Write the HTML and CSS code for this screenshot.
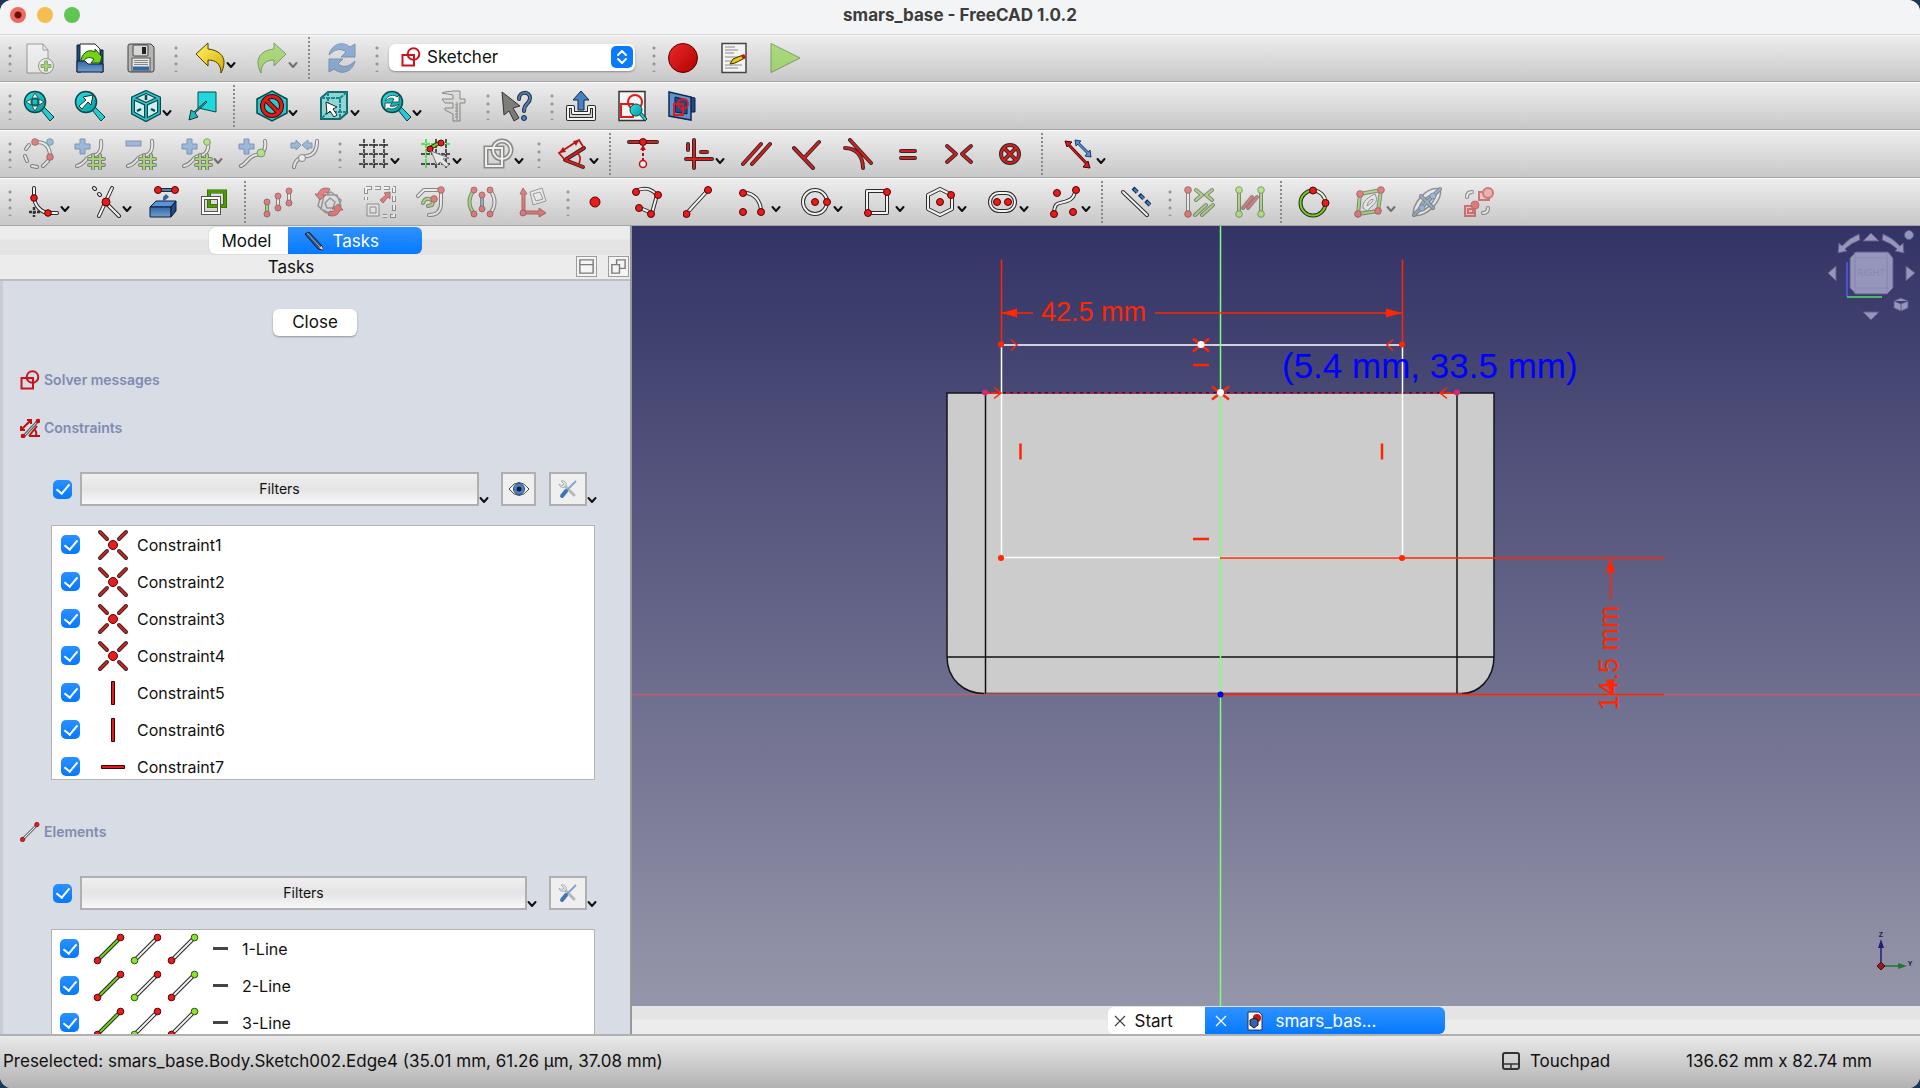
FILE: index.html
```html
<!DOCTYPE html>
<html lang="en">
<head>
<meta charset="utf-8">
<title>smars_base - FreeCAD 1.0.2</title>
<link rel="stylesheet" href="styles.css">
</head>
<body>
<svg class="defs" aria-hidden="true">
  <defs>
    <linearGradient id="gy" x1="0" y1="0" x2="1" y2="1"><stop offset="0" stop-color="#fff36b"/><stop offset="1" stop-color="#d9ae00"/></linearGradient>
    <linearGradient id="gb" x1="0" y1="0" x2="0" y2="1"><stop offset="0" stop-color="#3465a4"/><stop offset="1" stop-color="#729fcf"/></linearGradient>
    <linearGradient id="gr" x1="0" y1="0" x2="1" y2="1"><stop offset="0" stop-color="#ef2929"/><stop offset="1" stop-color="#b00000"/></linearGradient>
    <linearGradient id="gt" x1="0" y1="0" x2="1" y2="1"><stop offset="0" stop-color="#34e0e2"/><stop offset="1" stop-color="#06989a"/></linearGradient>
    <symbol id="chev" viewBox="0 0 10 8"><path d="M1.500 2L5 6L8.500 2" fill="none" stroke="currentColor" stroke-width="2" stroke-linecap="round" stroke-linejoin="round"/></symbol>
    <symbol id="sketch" viewBox="0 0 20 20"><path d="M1.500 8H13V18.500H1.500Z" fill="none" stroke="#c8141e" stroke-width="2"/><circle cx="12.500" cy="7" r="5.800" fill="none" stroke="#c8141e" stroke-width="2"/></symbol>
    <symbol id="coincident" viewBox="0 0 32 32">
      <path class="k" d="M3 3L10 10M29 3L22 10M3 29L10 22M29 29L22 22"/><path class="r" d="M3 3L10 10M29 3L22 10M3 29L10 22M29 29L22 22"/><circle class="dr" cx="16" cy="16" r="4.500"/>
    </symbol>
    <symbol id="vertical" viewBox="0 0 32 32"><path d="M14.500 4.500H17.500V27.500H14.500Z" fill="#e01b1b" stroke="#3a0000"/></symbol>
    <symbol id="horizontal" viewBox="0 0 32 32"><path d="M4.500 14.500H27.500V17.500H4.500Z" fill="#e01b1b" stroke="#3a0000"/></symbol>
    <symbol id="edge" viewBox="0 0 32 32"><path class="k" d="M4 28L28 4"/><path class="g" d="M4 28L28 4"/><circle class="dr" cx="4.500" cy="27.500" r="3.300"/><circle class="dr" cx="27.500" cy="4.500" r="3.300"/></symbol>
    <symbol id="startpoint" viewBox="0 0 32 32"><path class="k" d="M4 28L28 4"/><path class="w" d="M4 28L28 4"/><circle class="dg" cx="4.500" cy="27.500" r="3.300"/><circle class="dr" cx="27.500" cy="4.500" r="3.300"/></symbol>
    <symbol id="endpoint" viewBox="0 0 32 32"><path class="k" d="M4 28L28 4"/><path class="w" d="M4 28L28 4"/><circle class="dr" cx="4.500" cy="27.500" r="3.300"/><circle class="dg" cx="27.500" cy="4.500" r="3.300"/></symbol>
    <symbol id="line" viewBox="0 0 32 32"><path class="k" d="M4 28L27 5"/><path class="w" d="M4 28L27 5"/><circle class="dr" cx="4" cy="28" r="3.500"/><circle class="dr" cx="27" cy="4" r="3.500"/></symbol>
    <symbol id="lens" viewBox="0 0 32 32"><path d="M18 20L27 31L31 27L21 17Z" fill="#22ccd0" stroke="#0a3a3c"/><circle cx="12" cy="12" r="10.500" fill="url(#gt)" stroke="#0a4a4c" stroke-width="1.500"/></symbol>
    <symbol id="plus" viewBox="0 0 32 32"><path d="M6 1H11V6H16V11H11V16H6V11H1V6H6Z" fill="#5a8fd0" stroke="#204a87"/></symbol>
    <symbol id="hash" viewBox="0 0 32 32"><path class="k" d="M19 17V31M26 17V31M15 21H30M15 27H30"/><path class="g" d="M19 17V31M26 17V31M15 21H30M15 27H30"/></symbol>
    <symbol id="tools" viewBox="0 0 20 20"><path d="M6 6L16 16" stroke="#b4b8bc" stroke-width="3" stroke-linecap="round"/><path d="M3 2L6 5L4 7L1 5C2 9 5 9 7 8L8 7C9 4 7 1 3 2Z" fill="#dfe2e4" stroke="#a0a4a8" stroke-width=".8"/><path d="M18 2L9 11" stroke="#7fa5cc" stroke-width="1.800"/><path d="M8 12L4 17" stroke="#3f74b8" stroke-width="4" stroke-linecap="round"/></symbol>
  </defs>
</svg>

<div class="app">
  <header class="titlebar">
    <div class="lights"><span class="light close"></span><span class="light min"></span><span class="light max"></span></div>
    <h1>smars_base - FreeCAD 1.0.2</h1>
  </header>

  <div class="toolbar main" role="toolbar" aria-label="File">
    <span class="grip"></span>
    <button class="tool off" aria-label="New"><svg viewBox="0 0 32 32"><path d="M4 2H20L25 8V31H4Z" fill="#fafafa" stroke="#555"/><path d="M20 2V8H25" fill="none" stroke="#555"/><circle cx="23" cy="24" r="7.500" fill="#fff" stroke="#555"/><path d="M21.500 19H24.500V22.500H28V25.500H24.500V29H21.500V25.500H18V22.500H21.500Z" fill="#73d216" stroke="#3a7a04"/></svg></button>
    <button class="tool" aria-label="Open"><svg viewBox="0 0 32 32"><path d="M3 3H7V30H3ZM26 8H29V30H26Z" fill="#204a87" stroke="#0b1e3c"/><path d="M6 2H21L26 7V24H6Z" fill="#fff" stroke="#222"/><path d="M7 18C9 9 16 7 21 10V7L28 15L26 21H17L20 17C15 14 11 16 9 20Z" fill="#73d216" stroke="#1f4d02"/><path d="M3 19H11L14 22H29V30H3Z" fill="url(#gb)" stroke="#0b1e3c"/></svg></button>
    <button class="tool" aria-label="Save"><svg viewBox="0 0 32 32"><path d="M3 4Q3 2 5 2H26L29 5V28Q29 30 27 30H5Q3 30 3 28Z" fill="#b4b6b2" stroke="#444"/><rect x="8" y="3" width="15" height="11" rx="1" fill="#d8d8d8" stroke="#444"/><rect x="17" y="5" width="4" height="7" fill="#222"/><rect x="7" y="16" width="18" height="13" fill="#e6e8e6" stroke="#555"/><path d="M9 18.500H23M9 20.500H23M9 22.500H23" stroke="#888"/><rect x="8" y="24.500" width="16" height="4" fill="#3465a4"/></svg></button>
    <span class="grip"></span>
    <button class="tool menu" aria-label="Undo"><svg viewBox="0 0 32 32"><path d="M2 12L14 1V7C25 8 30 14 30 20C30 25 28 29 27 31C27 22 22 18 14 18V24Z" fill="url(#gy)" stroke="#4d4000"/></svg><svg class="chev"><use href="#chev"/></svg></button>
    <button class="tool menu off" aria-label="Redo"><svg viewBox="0 0 32 32"><path d="M30 12L18 1V7C7 8 2 14 2 20C2 25 4 29 5 31C5 22 10 18 18 18V24Z" fill="#73d216" stroke="#1f5d02"/></svg><svg class="chev"><use href="#chev"/></svg></button>
    <span class="sep"></span>
    <button class="tool off" aria-label="Refresh"><svg viewBox="0 0 32 32"><path d="M3 13C5 3 16 -2 24 5L29 2V15H15L20 10C15 6 9 7 3 13ZM29 19C27 29 16 34 8 27L3 30V17H17L12 22C17 26 23 25 29 19Z" fill="#3f78c4" stroke="#204a87"/></svg></button>
    <span class="grip"></span>
    <label class="workbench"><svg class="wb-icon"><use href="#sketch"/></svg>
      <select aria-label="Workbench"><option>Sketcher</option></select>
      <svg class="stepper" viewBox="0 0 22 22"><rect width="22" height="22" rx="5" fill="#0a7aff"/><path d="M7 9L11 5L15 9M7 13L11 17L15 13" fill="none" stroke="#fff" stroke-width="2" stroke-linecap="round" stroke-linejoin="round"/></svg>
    </label>
    <span class="grip"></span>
    <button class="tool" aria-label="Record macro"><svg viewBox="0 0 32 32"><circle cx="16" cy="16" r="14.500" fill="url(#gr)" stroke="#5a0000"/></svg></button>
    <button class="tool" aria-label="Macros"><svg viewBox="0 0 32 32"><rect x="4" y="1.500" width="24" height="29" fill="#f2f3f1" stroke="#444" stroke-width="1.500"/><path d="M7 5H17M7 8H20M7 11H16M7 15H25M7 19H13M7 23H24M7 26H20" stroke="#888"/><path d="M12 22L15 17L25 13L27 16L17 21Z" fill="#e8c810" stroke="#3a3000"/><path d="M23 14L26 12L28 15L25 17Z" fill="#cc1010"/></svg></button>
    <button class="tool off" aria-label="Execute macro"><svg viewBox="0 0 32 32"><path d="M2 1.500L31 16L2 30.500Z" fill="#73d216" stroke="#1f5d02"/></svg></button>
  </div>

  <div class="toolbar" role="toolbar" aria-label="View">
    <span class="grip"></span>
    <button class="tool" aria-label="Fit all"><svg viewBox="0 0 32 32"><use href="#lens"/><path d="M12 3L15 8H9ZM12 21L15 16H9ZM3 12L8 9V15ZM21 12L16 9V15Z" fill="#fff" stroke="#0a3a3c" stroke-width=".8"/><rect x="9" y="9" width="6" height="6" fill="none" stroke="#0a3a3c"/></svg></button>
    <button class="tool" aria-label="Fit selection"><svg viewBox="0 0 32 32"><use href="#lens"/><path d="M5 16L12 10L9 7L19 5L17 15L14 12L8 19Z" fill="#fff" stroke="#0a3a3c"/></svg></button>
    <button class="tool menu" aria-label="Isometric"><svg viewBox="0 0 32 32"><path class="cube" d="M16 2L29 8V23L16 30L3 23V8ZM3 8L16 14L29 8M16 14V30"/><path d="M16 2L29 8V23L16 30L3 23V8ZM3 8L16 14L29 8M16 14V30" fill="none" stroke="#2cc8cc" stroke-width="1.500"/><path d="M16 5V10M7 21L11 19M25 21L21 19" stroke="#0a4a4c" stroke-width="2.500"/></svg><svg class="chev"><use href="#chev"/></svg></button>
    <button class="tool" aria-label="View plane"><svg viewBox="0 0 32 32"><path d="M11 2H29V22L11 18Z" fill="#22d8dc" stroke="#0a4a4c"/><path d="M20 12L8 23L11 27L2 30L4 20L7 22L19 11Z" fill="#22b8bc" stroke="#0a3a3c"/></svg></button>
    <span class="sep"></span>
    <button class="tool menu" aria-label="Draw style"><svg viewBox="0 0 32 32"><path d="M16 1L31 9V23L16 31L1 23V9Z" fill="#1fcfd2" stroke="#0a4a4c" stroke-width="1.500"/><circle cx="16" cy="16" r="9.500" fill="none" stroke="#4a0000" stroke-width="5"/><path d="M9 9L23 23" stroke="#4a0000" stroke-width="5"/><circle cx="16" cy="16" r="9.500" fill="none" stroke="#e01b1b" stroke-width="3"/><path d="M9 9L23 23" stroke="#e01b1b" stroke-width="3"/></svg><svg class="chev"><use href="#chev"/></svg></button>
    <button class="tool menu" aria-label="Bounding box"><svg viewBox="0 0 32 32"><path d="M3 8L10 2H29V23L22 29H3Z" fill="#8fd4d6" stroke="#16696c" stroke-width="2"/><path d="M3 8H22V29M22 8L29 2M10 2V22L3 29M10 22H29" fill="none" stroke="#16898c" stroke-width="2" stroke-dasharray="4 1"/><path d="M8 12L19 17L15 19L19 25L16 27L12 21L9 24Z" fill="#fff" stroke="#222"/></svg><svg class="chev"><use href="#chev"/></svg></button>
    <button class="tool menu" aria-label="Sync view"><svg viewBox="0 0 32 32"><use href="#lens"/><path d="M5 11C7 5 14 4 17 7L19 5V12H12L14 9C11 7 8 9 5 11ZM19 14C17 19 11 20 8 18L5 20V13H12L10 16C13 17 16 16 19 14Z" fill="#fff" stroke="#0a3a3c" stroke-width=".8"/></svg><svg class="chev"><use href="#chev"/></svg></button>
    <button class="tool off" aria-label="Measure"><svg viewBox="0 0 32 32"><path d="M5 3C9 1 13 2 16 1H23V9H28V13H23V31H16V24L8 20V18H16V13H8L5 9H16V5Z" fill="#d4d4d0" stroke="#333"/><path d="M20 12V30M18 15H21M18 18H21M18 21H21M18 24H21M18 27H21" stroke="#444"/></svg></button>
    <span class="grip"></span>
    <button class="tool" aria-label="What's this"><svg viewBox="0 0 32 32"><path d="M1 2L19 16L12 18L18 28L13 31L8 21L3 25Z" fill="#7b7d79" stroke="#333"/><path class="k" d="M18 9C18 1 29 1 29 8C29 14 23 13 23 21"/><path class="b" d="M18 9C18 1 29 1 29 8C29 14 23 13 23 21"/><circle cx="23" cy="28" r="2.500" fill="#4a80c0" stroke="#10284c"/></svg></button>
    <span class="grip"></span>
    <button class="tool" aria-label="Leave sketch"><svg viewBox="0 0 32 32"><path class="k" d="M8 17H3V29H29V17H24M8 17V23H24V17"/><path class="w" d="M8 17H3V29H29V17H24M8 17V23H24V17"/><path d="M16 1L24 10H19V20H13V10H8Z" fill="#4a80c0" stroke="#10284c"/></svg></button>
    <button class="tool" aria-label="View sketch"><svg viewBox="0 0 32 32"><rect x="3" y="1.500" width="26" height="29" fill="#f4f4f4" stroke="#333" stroke-width="1.500"/><path d="M5 14H17V27H5Z" fill="none" stroke="#e01b1b" stroke-width="2"/><circle cx="19" cy="12" r="7" fill="none" stroke="#e01b1b" stroke-width="2"/><path d="M23 24L29 31L31 29L25 22Z" fill="#22ccd0" stroke="#0a3a3c"/><circle cx="20" cy="20" r="6" fill="url(#gt)" stroke="#0a4a4c"/></svg></button>
    <button class="tool" aria-label="View section"><svg viewBox="0 0 32 32"><path d="M18 6L28 8V22H18Z" fill="#204a87" stroke="#0b1e3c"/><path d="M2 2L24 7V30L2 26Z" fill="#5f93cf" stroke="#10284c" stroke-width="1.500"/><path d="M8 7L20 10V24L8 22Z" fill="#204a87" stroke="#0b1e3c"/><path d="M7 14H16V25H7Z" fill="none" stroke="#e01b1b" stroke-width="2"/><circle cx="16" cy="14" r="5" fill="none" stroke="#e01b1b" stroke-width="2"/></svg></button>
  </div>

  <div class="toolbar" role="toolbar" aria-label="Constraints">
    <span class="grip"></span>
    <button class="tool off" aria-label="B-spline"><svg viewBox="0 0 32 32"><path class="k" d="M12 5C20 2 27 8 27 18M6 7L3 11M2 18L4 23M9 28L14 29M20 28L25 23"/><path class="w" d="M12 5C20 2 27 8 27 18M6 7L3 11M2 18L4 23M9 28L14 29M20 28L25 23"/><circle class="dr" cx="12" cy="4" r="3.300"/><circle class="db" cx="27" cy="4" r="3.300"/><circle class="dr" cx="27" cy="19" r="3.300"/></svg></button>
    <button class="tool off" aria-label="Increase degree"><svg viewBox="0 0 32 32"><path class="k" d="M3 28C12 26 11 19 18 18C26 17 28 11 27 3"/><path class="w" d="M3 28C12 26 11 19 18 18C26 17 28 11 27 3"/><use href="#plus"/><use href="#hash"/></svg></button>
    <button class="tool off" aria-label="Decrease degree"><svg viewBox="0 0 32 32"><path class="k" d="M3 28C12 26 11 19 18 18C26 17 28 11 27 3"/><path class="w" d="M3 28C12 26 11 19 18 18C26 17 28 11 27 3"/><rect x="1" y="3" width="15" height="5" fill="#5a8fd0" stroke="#204a87"/><use href="#hash"/></svg></button>
    <button class="tool menu off" aria-label="Increase multiplicity"><svg viewBox="0 0 32 32"><path class="k" d="M3 28C12 26 11 19 18 18C26 17 28 11 27 3"/><path class="w" d="M3 28C12 26 11 19 18 18C26 17 28 11 27 3"/><use href="#plus"/><use href="#hash"/><circle class="dg" cx="26" cy="4" r="3.300"/></svg><svg class="chev"><use href="#chev"/></svg></button>
    <button class="tool off" aria-label="Insert knot"><svg viewBox="0 0 32 32"><path class="k" d="M3 28C9 26 9 19 18 17C26 16 28 11 27 3"/><path class="w" d="M3 28C9 26 9 19 18 17C26 16 28 11 27 3"/><use href="#plus"/><circle class="dg" cx="23" cy="15" r="4"/></svg></button>
    <button class="tool off" aria-label="Join curves"><svg viewBox="0 0 32 32"><path class="k" d="M5 29C6 22 12 18 18 18C26 17 28 11 28 3"/><path class="w" d="M5 29C6 22 12 18 18 18C26 17 28 11 28 3"/><path d="M2 5H7V2L12 7L7 12V10H2ZM23 5H19V2L13 7L19 12V10H23Z" fill="#5a8fd0" stroke="#204a87"/><circle cx="13" cy="20" r="3.500" fill="#fff" stroke="#333"/></svg></button>
    <span class="grip"></span>
    <button class="tool menu" aria-label="Grid"><svg viewBox="0 0 32 32"><path d="M1 7H31M1 16H31M1 26H31M6 1V31M16 1V31M26 1V31" fill="none" stroke="#222" stroke-width="1.500" stroke-dasharray="4 1"/></svg><svg class="chev"><use href="#chev"/></svg></button>
    <button class="tool menu" aria-label="Snap"><svg viewBox="0 0 32 32"><path d="M1 16H31M1 26H31M16 1V31M26 1V31" fill="none" stroke="#222" stroke-width="1.500" stroke-dasharray="4 1"/><path d="M1 6H31M6 1V31" fill="none" stroke="#2adf2a" stroke-width="1.500" stroke-dasharray="4 1"/><path class="k" d="M10 10L21 4"/><path class="g" d="M10 10L21 4"/><circle class="dr" cx="10" cy="11" r="3"/><circle class="dr" cx="21" cy="5" r="3"/><path d="M11 13L29 20L23 21L29 27L26 29L20 24L17 27Z" fill="#e6e6e6" stroke="#777"/></svg><svg class="chev"><use href="#chev"/></svg></button>
    <button class="tool menu" aria-label="Rendering order"><svg viewBox="0 0 32 32"><path d="M4 10H20V28H4Z" fill="none" stroke="#8a8a85" stroke-width="5"/><circle cx="20" cy="12" r="9" fill="none" stroke="#8a8a85" stroke-width="5"/><path d="M4 10H20V28H4Z" fill="none" stroke="#eee" stroke-width="2"/><circle cx="20" cy="12" r="9" fill="none" stroke="#eee" stroke-width="2"/></svg><svg class="chev"><use href="#chev"/></svg></button>
    <span class="grip"></span>
    <button class="tool menu" aria-label="Dimension"><svg viewBox="0 0 32 32"><path class="k" d="M26 29L8 22L27 10"/><path class="r" d="M26 29L8 22L27 10"/><path d="M20 15Q25 18 22 26M8 22L2 15L22 2L27 10" fill="none" stroke="#c01010" stroke-width="1.700"/><path d="M2 15L6 9L9 14ZM22 2L16 3L19 8Z" fill="#c01010"/></svg><svg class="chev"><use href="#chev"/></svg></button>
    <span class="sep"></span>
    <button class="tool" aria-label="Point on object"><svg viewBox="0 0 32 32"><path class="k" d="M2 4H30"/><path class="r" d="M2 4H30"/><circle class="dr" cx="16" cy="4" r="3.500"/><path d="M16 10V22" stroke="#b01010" stroke-width="2" stroke-dasharray="3 2"/><path d="M16 7L19 12H13Z" fill="#c01010"/><circle cx="16" cy="26" r="3.500" fill="#eee" stroke="#c01010" stroke-width="1.500"/></svg></button>
    <button class="tool menu" aria-label="Horizontal or vertical"><svg viewBox="0 0 32 32"><path class="k" d="M11 2V30M3 21H29M5 6V12M18 14H24"/><path class="r" d="M11 2V30M3 21H29M5 6V12M18 14H24"/></svg><svg class="chev"><use href="#chev"/></svg></button>
    <button class="tool" aria-label="Parallel"><svg viewBox="0 0 32 32"><path class="k" d="M3 26L21 6M12 26L30 6"/><path class="r" d="M3 26L21 6M12 26L30 6"/></svg></button>
    <button class="tool" aria-label="Perpendicular"><svg viewBox="0 0 32 32"><path class="k" d="M3 10L22 30M13 20L28 4"/><path class="r" d="M3 10L22 30M13 20L28 4"/></svg></button>
    <button class="tool" aria-label="Tangent"><svg viewBox="0 0 32 32"><path class="k" d="M8 2L29 25M3 10C14 10 21 18 21 30"/><path class="r" d="M8 2L29 25M3 10C14 10 21 18 21 30"/></svg></button>
    <button class="tool" aria-label="Equal"><svg viewBox="0 0 32 32"><path class="k" d="M8 13H22M8 20H22"/><path class="r" d="M8 13H22M8 20H22"/></svg></button>
    <button class="tool" aria-label="Symmetric"><svg viewBox="0 0 32 32"><path class="k" d="M3 8L12 16L3 24M27 8L18 16L27 24"/><path class="r" d="M3 8L12 16L3 24M27 8L18 16L27 24"/></svg></button>
    <button class="tool" aria-label="Block"><svg viewBox="0 0 32 32"><path class="k" d="M9 10L21 22M21 10L9 22"/><circle class="k" cx="15" cy="16" r="9"/><circle class="r" cx="15" cy="16" r="9"/><path class="r" d="M9 10L21 22M21 10L9 22"/></svg></button>
    <span class="sep"></span>
    <button class="tool menu" aria-label="Toggle constraint"><svg viewBox="0 0 32 32"><path d="M4 6L23 26" stroke="#3a0000" stroke-width="3"/><path d="M1 3L8 4L3 9ZM26 30L19 29L24 23Z" fill="#e01b1b" stroke="#3a0000"/><path d="M4 6L23 26" stroke="#e01b1b" stroke-width="1.500"/><path d="M13 4L25 16" stroke="#1a3a68" stroke-width="3"/><path d="M11 2L17 3L12 8ZM27 19L21 18L26 12Z" fill="#5a90d4" stroke="#1a3a68"/><path d="M13 4L25 16" stroke="#5a90d4" stroke-width="1.500"/></svg><svg class="chev"><use href="#chev"/></svg></button>
  </div>

  <div class="toolbar" role="toolbar" aria-label="Geometry">
    <span class="grip"></span>
    <button class="tool menu" aria-label="Fillet"><svg viewBox="0 0 32 32"><path class="k" d="M6 2V10C6 20 14 27 21 27H29"/><path class="w" d="M6 2V10C6 20 14 27 21 27H29"/><path d="M6 21V31M1 26H12" stroke="#333" stroke-width="2.500" stroke-dasharray="3 1"/><circle class="dr" cx="6" cy="12" r="3.300"/><circle class="dr" cx="20" cy="27" r="3.300"/></svg><svg class="chev"><use href="#chev"/></svg></button>
    <button class="tool menu" aria-label="Trim"><svg viewBox="0 0 32 32"><path class="k" d="M22 2L9 30M15 16L29 30M4 2L5 3M9 8L10 9"/><path class="w" d="M22 2L9 30M15 16L29 30M4 2L5 3M9 8L10 9"/><circle class="dr" cx="16" cy="16" r="4"/></svg><svg class="chev"><use href="#chev"/></svg></button>
    <button class="tool" aria-label="External geometry"><svg viewBox="0 0 32 32"><path d="M3 21L9 15H29L24 21Z" fill="#5a93d8" stroke="#0b1e3c"/><path d="M3 21H24V31H3Z" fill="url(#gb)" stroke="#0b1e3c"/><path d="M24 21L29 15V25L24 31Z" fill="#204a87" stroke="#0b1e3c"/><path class="k" d="M12 4H28"/><path class="b" d="M12 4H28"/><path d="M19 8L22 11L16 16V11Z" fill="#3465a4"/><circle class="dr" cx="11" cy="4" r="3.500"/><circle class="dr" cx="28" cy="4" r="3.500"/></svg></button>
    <button class="tool" aria-label="Carbon copy"><svg viewBox="0 0 32 32"><path d="M11 5.500H27V20H11Z" fill="none" stroke="#2a5a02" stroke-width="4"/><path d="M11 5.500H27V20H11Z" fill="none" stroke="#4e9a06" stroke-width="2.800"/><path d="M5 12H21V27H5Z" fill="none" stroke="#555" stroke-width="4"/><path d="M5 12H21V27H5Z" fill="none" stroke="#fff" stroke-width="2"/></svg></button>
    <span class="sep"></span>
    <button class="tool off" aria-label="Translate"><svg viewBox="0 0 32 32"><path class="k" d="M5 17V28M16 11V22M27 6V17"/><path class="w" d="M16 11V22M27 6V17"/><path class="g" d="M5 17V28"/><g class="dr"><circle cx="5" cy="16" r="3"/><circle cx="5" cy="28" r="3"/><circle cx="16" cy="10" r="3"/><circle cx="16" cy="22" r="3"/><circle cx="27" cy="5" r="3"/><circle cx="27" cy="17" r="3"/></g></svg></button>
    <button class="tool off" aria-label="Rotate"><svg viewBox="0 0 32 32"><path d="M7 12L18 6L28 14L25 25L13 27L5 20ZM11 9L24 9L28 20L18 28L8 23ZM12 17L17 12L22 16L20 22L14 22Z" fill="none" stroke="#555" stroke-width="1.500"/><path d="M2 8H5C7 2 12 1 17 3L15 7C12 6 10 7 10 9H13L7 14ZM30 24H27C25 30 20 31 15 29L17 25C20 26 22 25 22 23H19L25 18Z" fill="#e02020" stroke="#6a0000"/></svg></button>
    <button class="tool off" aria-label="Scale"><svg viewBox="0 0 32 32"><path d="M2 2H30V30H19M2 2V14" fill="none" stroke="#444" stroke-width="4" stroke-dasharray="6 3"/><path d="M2 2H30V30H19M2 2V14" fill="none" stroke="#fff" stroke-width="2" stroke-dasharray="5 4"/><path d="M3 18H15V30H3ZM6 21H12V27H6Z" fill="#eee" stroke="#444"/><path d="M16 14L22 9L20 7L26 6V13L24 11L19 17Z" fill="#e02020" stroke="#6a0000"/></svg></button>
    <button class="tool off" aria-label="Offset"><svg viewBox="0 0 32 32"><path class="k" d="M3 10L9 4H26V17Q26 29 14 29M8 17Q10 12 14 13Q20 14 17 19L13 20"/><path class="w" d="M3 10L9 4H26V17Q26 29 14 29"/><path class="g" d="M8 17Q10 12 14 13Q20 14 17 19L13 20"/><circle class="dr" cx="26" cy="4" r="3.300"/><circle class="dr" cx="19" cy="13" r="3.300"/></svg></button>
    <button class="tool off" aria-label="Mirror"><svg viewBox="0 0 32 32"><path class="k" d="M8 4Q-1 16 8 28M24 4Q33 16 24 28M16 9V23"/><path class="g" d="M8 4Q-1 16 8 28"/><path class="w" d="M24 4Q33 16 24 28"/><path class="b" d="M16 9V23"/><g class="dr"><circle cx="8" cy="4" r="3"/><circle cx="8" cy="28" r="3"/><circle cx="24" cy="4" r="3"/><circle cx="24" cy="28" r="3"/><circle cx="16" cy="9" r="3"/><circle cx="16" cy="23" r="3"/></g></svg></button>
    <button class="tool off" aria-label="Remove axes alignment"><svg viewBox="0 0 32 32"><path d="M13 6L25 2L29 15L16 19ZM16 8L23 6L26 13L19 15Z" fill="#eee" stroke="#555"/><path d="M5 8H3L6 2L10 8H8V25H22V22L29 27L22 31V28H5Z" fill="#e02020" stroke="#6a0000"/><circle class="dr" cx="6" cy="27" r="3"/></svg></button>
    <span class="grip"></span>
    <button class="tool" aria-label="Point"><svg viewBox="0 0 32 32"><circle class="dr" cx="14" cy="16" r="5"/></svg></button>
    <button class="tool" aria-label="Polyline"><svg viewBox="0 0 32 32"><path class="k" d="M4 5C11 1 19 2 25 9L20 27L8 22"/><path class="w" d="M4 5C11 1 19 2 25 9L20 27L8 22"/><circle class="dr" cx="4" cy="6" r="3.500"/><circle class="dr" cx="26" cy="9" r="3.500"/><circle class="dr" cx="19" cy="28" r="3.500"/><circle class="dr" cx="7" cy="22" r="3.500"/></svg></button>
    <button class="tool" aria-label="Line"><svg viewBox="0 0 32 32"><path class="k" d="M3 28L25 4"/><path class="w" d="M3 28L25 4"/><circle class="dr" cx="3.500" cy="28" r="3.500"/><circle class="dr" cx="25" cy="4" r="3.500"/></svg></button>
    <button class="tool menu" aria-label="Arc"><svg viewBox="0 0 32 32"><path class="k" d="M4 7C15 6 22 15 22 26"/><path class="w" d="M4 7C15 6 22 15 22 26"/><circle class="dr" cx="4" cy="7" r="3.500"/><circle class="dr" cx="22" cy="26" r="3.500"/><circle class="dr" cx="4" cy="26" r="3.500"/></svg><svg class="chev"><use href="#chev"/></svg></button>
    <button class="tool menu" aria-label="Circle"><svg viewBox="0 0 32 32"><circle class="k" cx="14" cy="16" r="12"/><circle class="w" cx="14" cy="16" r="12"/><circle class="dr" cx="14" cy="16" r="3.500"/><circle class="dr" cx="26" cy="16" r="3.500"/></svg><svg class="chev"><use href="#chev"/></svg></button>
    <button class="tool menu" aria-label="Rectangle"><svg viewBox="0 0 32 32"><path class="k" d="M4 5H24V27H4Z"/><path class="w" d="M4 5H24V27H4Z"/><circle class="dr" cx="24" cy="6" r="3.500"/><circle class="dr" cx="5" cy="27" r="3.500"/></svg><svg class="chev"><use href="#chev"/></svg></button>
    <button class="tool menu" aria-label="Polygon"><svg viewBox="0 0 32 32"><path class="k" d="M15 3L27 9V23L15 29L3 23V9Z"/><path class="w" d="M15 3L27 9V23L15 29L3 23V9Z"/><circle class="dr" cx="15" cy="16" r="3.500"/><circle class="dr" cx="26" cy="9" r="3.500"/></svg><svg class="chev"><use href="#chev"/></svg></button>
    <button class="tool menu" aria-label="Slot"><svg viewBox="0 0 32 32"><rect class="k" x="3" y="7" width="25" height="18" rx="9"/><rect class="w" x="3" y="7" width="25" height="18" rx="9"/><circle class="dr" cx="10" cy="16" r="3.500"/><circle class="dr" cx="21" cy="16" r="3.500"/></svg><svg class="chev"><use href="#chev"/></svg></button>
    <button class="tool menu" aria-label="B-spline curve"><svg viewBox="0 0 32 32"><path class="k" d="M5 28C5 14 12 18 18 15C25 13 25 8 27 4"/><path class="w" d="M5 28C5 14 12 18 18 15C25 13 25 8 27 4"/><circle class="dr" cx="5" cy="28" r="3.500"/><circle class="dr" cx="27" cy="4" r="3.500"/><circle class="dr" cx="8" cy="7" r="3.500"/><circle class="dr" cx="24" cy="26" r="3.500"/></svg><svg class="chev"><use href="#chev"/></svg></button>
    <span class="sep"></span>
    <button class="tool" aria-label="Construction geometry"><svg viewBox="0 0 32 32"><path class="k" d="M4 6L28 29"/><path class="w" d="M4 6L28 29"/><path d="M14 2L31 19" stroke="#10284c" stroke-width="4" stroke-dasharray="6 3"/><path d="M15 3L31 19" stroke="#4a80c0" stroke-width="2" stroke-dasharray="5 4"/></svg></button>
    <span class="grip"></span>
    <button class="tool off" aria-label="Select associated constraints"><svg viewBox="0 0 32 32"><path class="k" d="M5 5V28M13 4L19 9L13 14M29 4L23 9L29 14M12 29L23 19M19 29L30 19"/><path class="w" d="M5 5V28"/><path class="g" d="M13 4L19 9L13 14M29 4L23 9L29 14M12 29L23 19M19 29L30 19"/><circle class="dr" cx="5" cy="4" r="3.300"/><circle class="dr" cx="5" cy="28" r="3.300"/></svg></button>
    <button class="tool off" aria-label="Select associated geometry"><svg viewBox="0 0 32 32"><path class="k" d="M5 5V28M27 5V28M9 22L18 11M14 22L23 11"/><path class="g" d="M5 5V28M27 5V28"/><path class="r" d="M9 22L18 11M14 22L23 11"/><g class="dg"><circle cx="5" cy="4" r="3.300"/><circle cx="5" cy="28" r="3.300"/><circle cx="27" cy="4" r="3.300"/><circle cx="27" cy="28" r="3.300"/></g></svg></button>
    <span class="sep"></span>
    <button class="tool" aria-label="Select degrees of freedom"><svg viewBox="0 0 32 32"><circle class="k" cx="15" cy="17" r="12.500"/><circle class="g" cx="15" cy="17" r="12.500"/><path class="w" d="M15 4.500A12.500 12.500 0 0 1 27.500 17"/><circle class="dr" cx="15" cy="4.500" r="3.500"/><circle class="dr" cx="27.500" cy="17" r="3.500"/></svg></button>
    <button class="tool menu off" aria-label="Internal geometry"><svg viewBox="0 0 32 32"><path class="k" d="M6 8L27 4L24 25L4 28Z"/><path class="g" d="M6 8L27 4L24 25L4 28Z"/><path d="M9 22C8 15 15 11 21 8C24 14 22 17 18 20L13 25ZM13 20C14 15 16 14 19 13C19 17 16 17 13 20Z" fill="#eee" stroke="#444"/><g class="dr"><circle cx="6" cy="8" r="3.300"/><circle cx="27" cy="4" r="3.300"/><circle cx="24" cy="25" r="3.300"/><circle cx="4" cy="28" r="3.300"/></g></svg><svg class="chev"><use href="#chev"/></svg></button>
    <button class="tool off" aria-label="Ellipse axes"><svg viewBox="0 0 32 32"><path d="M3 29C-1 20 16 -1 29 3C33 14 14 33 3 29ZM8 25C7 18 16 9 25 7C25 14 16 25 8 25Z" fill="#eee" stroke="#444" stroke-width="1.500"/><path class="k" d="M3 29L29 3M10 10L22 22"/><path class="b" d="M3 29L29 3M10 10L22 22"/><circle class="db" cx="11" cy="22" r="3"/><circle class="db" cx="22" cy="10" r="3"/></svg></button>
    <button class="tool off" aria-label="Switch virtual space"><svg viewBox="0 0 32 32"><path d="M3 20H13V30H3ZM6 23H11V27H6ZM17 6H27V14H17Z" fill="#f5b0b0" stroke="#c01010" stroke-width="2"/><circle cx="13" cy="19" r="4" fill="#e02020" stroke="#900"/><circle cx="26" cy="7" r="5" fill="#f08080" stroke="#c01010" stroke-width="2"/><path class="k" d="M5 11Q5 6 10 6M26 22Q26 27 21 27"/><path class="w" d="M5 11Q5 6 10 6M26 22Q26 27 21 27"/></svg></button>
  </div>

  <main class="work">
    <aside class="dock">
      <div class="tabs top">
        <button class="tab model">Model</button>
        <button class="tab tasks active"><svg viewBox="0 0 20 20"><path d="M1 3L5 1L18 15L19 19L14 18Z" fill="#33557f" stroke="#0b1830"/><path d="M3 2L16 16" stroke="#8fb4e0"/><path d="M15 17L18 15L19 19Z" fill="#f0d8b0"/></svg>Tasks</button>
      </div>
      <div class="dock-title"><h2>Tasks</h2>
        <button class="mini" aria-label="Overlay"><svg viewBox="0 0 20 20"><path d="M3 3H17V17H3ZM3 8H17" fill="none" stroke="#7b7b7b" stroke-width="1.500"/></svg></button>
        <button class="mini" aria-label="Float"><svg viewBox="0 0 20 20"><path d="M3 8H11V17H3ZM8 8V3H17V12H11" fill="none" stroke="#7b7b7b" stroke-width="1.500"/></svg></button>
      </div>
      <div class="panel">
        <button class="close-btn">Close</button>
        <h3 class="first"><svg><use href="#sketch"/></svg>Solver messages</h3>
        <section>
          <h3><svg viewBox="0 0 20 20"><path d="M4 18L18 3" stroke="#555" stroke-width="3"/><path d="M4 18L18 3" stroke="#eee"/><path d="M1 12L11 2M1 8V12H5M11 6V2H7M9 18H20M9 18L17 8M14 11Q17 13 16 18" fill="none" stroke="#c01010" stroke-width="2"/><circle cx="3" cy="18" r="2.300" fill="#c01010"/><circle cx="18" cy="3" r="2.300" fill="#c01010"/></svg>Constraints</h3>
          <div class="filters">
            <input type="checkbox" checked aria-label="Enable constraint filter">
            <button class="filter">Filters</button><svg class="chev"><use href="#chev"/></svg>
            <button class="square eye" aria-label="Show or hide"><svg viewBox="0 0 20 20"><path d="M0 10Q10 -3 20 10Q10 23 0 10Z" fill="#fff" stroke="#444"/><circle cx="10" cy="10" r="5.500" fill="#4a86cc" stroke="#204a87"/><circle cx="10" cy="10" r="2.500" fill="#0b1830"/></svg></button>
            <button class="square settings" aria-label="Settings"><svg><use href="#tools"/></svg></button><svg class="chev"><use href="#chev"/></svg>
          </div>
          <ul class="list">
            <li><label><input type="checkbox" checked><svg><use href="#coincident"/></svg>Constraint1</label></li>
            <li><label><input type="checkbox" checked><svg><use href="#coincident"/></svg>Constraint2</label></li>
            <li><label><input type="checkbox" checked><svg><use href="#coincident"/></svg>Constraint3</label></li>
            <li><label><input type="checkbox" checked><svg><use href="#coincident"/></svg>Constraint4</label></li>
            <li><label><input type="checkbox" checked><svg><use href="#vertical"/></svg>Constraint5</label></li>
            <li><label><input type="checkbox" checked><svg><use href="#vertical"/></svg>Constraint6</label></li>
            <li><label><input type="checkbox" checked><svg><use href="#horizontal"/></svg>Constraint7</label></li>
          </ul>
        </section>
        <section>
          <h3><svg><use href="#line"/></svg>Elements</h3>
          <div class="filters">
            <input type="checkbox" checked aria-label="Enable element filter">
            <button class="filter">Filters</button><svg class="chev"><use href="#chev"/></svg>
            <button class="square settings" aria-label="Settings"><svg><use href="#tools"/></svg></button><svg class="chev"><use href="#chev"/></svg>
          </div>
          <ul class="list elements">
            <li><label><input type="checkbox" checked><svg><use href="#edge"/></svg><svg><use href="#startpoint"/></svg><svg><use href="#endpoint"/></svg><span class="dash"></span>1-Line</label></li>
            <li><label><input type="checkbox" checked><svg><use href="#edge"/></svg><svg><use href="#startpoint"/></svg><svg><use href="#endpoint"/></svg><span class="dash"></span>2-Line</label></li>
            <li><label><input type="checkbox" checked><svg><use href="#edge"/></svg><svg><use href="#startpoint"/></svg><svg><use href="#endpoint"/></svg><span class="dash"></span>3-Line</label></li>
          </ul>
        </section>
      </div>
    </aside>

    <div class="stage">
      <div class="viewport">
        <svg class="scene" viewBox="632 226 1288 781" preserveAspectRatio="xMidYMid slice">
          <path d="M632 695H1920" stroke="#c0606a" stroke-width="1.500"/>
          <path d="M947 393.500H1494V657C1494 680 1478 694 1462 694H984C964 694 947 680 947 657Z" fill="#ccc" stroke="#15151c" stroke-width="1.500"/>
          <path d="M984 694.500H1462" stroke="#b06060" stroke-width="1.500"/>
          <path d="M985.500 393V694M1457 393V694M947 657.500H1494" stroke="#111" stroke-width="1.500" fill="none"/>
          <path d="M985 393.500H1457" stroke="#c02a6a" stroke-width="1.500" stroke-dasharray="4 3"/>
          <path d="M1001.500 345.500H1402.500V558H1001.500Z" fill="none" stroke="#fff" stroke-width="1.500"/>
          <path d="M1220.500 226V1007" stroke="#7dff7d" stroke-width="1.500"/>
          <g stroke="#ff2600" stroke-width="1.500" fill="none">
            <path d="M1001.500 260V345M1402.500 260V345M1001 313.500H1033M1155 313.500H1402M1220 558.500H1664M1220 695H1664M1610.500 558V600"/>
            <path d="M1011 340L1017 345.500L1011 351M1393 340L1387 345.500L1393 351M987 393.500H1001M994 388L1001 393.500L994 399M1455 393.500H1440M1447 388L1440 393.500L1447 399"/>
          </g>
          <g stroke="#ff2600" stroke-width="2.500" fill="none">
            <path d="M1193 339L1209 352M1209 339L1193 352M1212 387L1229 400M1229 387L1212 400M1193 365.500H1209M1193 539.500H1209M1020.500 444V460M1382 444V460"/>
          </g>
          <g fill="#ff2600">
            <path d="M1001 313.500L1017 309V318ZM1402 313.500L1386 309V318ZM1610.500 558L1606 573H1615ZM1610.500 695L1606 680H1615Z"/>
            <circle cx="1001" cy="345" r="3"/><circle cx="1402" cy="345" r="3"/><circle cx="1001" cy="558.500" r="3"/><circle cx="1402" cy="558.500" r="3"/>
          </g>
          <circle cx="985" cy="393" r="3" fill="#cf2a72"/><circle cx="1457" cy="393" r="3" fill="#cf2a72"/>
          <circle cx="1201" cy="345" r="3.500" fill="#fff"/><circle cx="1220.500" cy="393" r="3.500" fill="#fff"/>
          <circle cx="1220.500" cy="695" r="3" fill="#0000e0"/>
          <text class="dim" x="1041" y="321">42.5 mm</text>
          <text class="dim" transform="translate(1618 711) rotate(-90)">14.5 mm</text>
          <text class="coords" x="1282" y="378">(5.4 mm, 33.5 mm)</text>
        </svg>
        <svg class="navcube" viewBox="0 0 92 98">
          <g fill="#9696bd" stroke="#5c5c88">
            <path d="M24 26L30 20H62L67 26V56L61 62H30L24 56Z"/>
            <path d="M45 1L53 9H37ZM45 88L53 80H37ZM2 41L10 34V49ZM89 41L80 34V49Z"/>
            <path d="M12 21L13 11L16 14Q23 6 33 2L34 8Q25 11 19 17L21 19ZM78 21L77 11L74 14Q67 6 57 2L56 8Q65 11 71 17L69 19Z"/>
            <circle cx="83" cy="3" r="4.500"/>
            <path d="M75 66L82 69V76L75 79L68 76V69ZM68 69L75 72L82 69M75 72V79"/>
          </g>
          <path d="M29 26H61V56H29ZM29 20V62M61 20V62" fill="none" stroke="#8888b2"/>
          <path d="M21 30V65" stroke="#5656ff" stroke-width="1.500"/><path d="M21 65H56" stroke="#4fb86a" stroke-width="2"/>
          <text x="45" y="44">RIGHT</text>
        </svg>
        <svg class="axes" viewBox="0 0 42 42">
          <path d="M6 34V14" stroke="#20207a" stroke-width="1.500"/><path d="M6 7L9 16H3Z" fill="#20207a"/>
          <path d="M6 34H24" stroke="#1c7a2c" stroke-width="1.500"/><path d="M32 34L23 31V37Z" fill="#1c7a2c"/>
          <path d="M6 30L10 34L6 38L2 34Z" fill="#a01818" stroke="#401010"/><text x="6" y="5">Z</text><text x="35" y="34">Y</text>
        </svg>
      </div>
      <div class="tabs bottom">
        <button class="tab start"><svg viewBox="0 0 12 12"><path d="M1 1L11 11M11 1L1 11" stroke="#444" stroke-width="1.300"/></svg>Start</button>
        <button class="tab doc active"><svg viewBox="0 0 12 12"><path d="M1 1L11 11M11 1L1 11" stroke="#fff" stroke-width="1.300"/></svg><svg class="file" viewBox="0 0 16 20"><path d="M1 1H12L15 4V19H1Z" fill="#fff" stroke="#333"/><circle cx="10" cy="7" r="4" fill="#d01010"/><path d="M3 9L7 7L11 9V14L7 17L3 14Z" fill="#3465a4" stroke="#0b1830"/></svg>smars_bas...</button>
      </div>
    </div>
  </main>

  <footer class="status">
    <span class="msg">Preselected: smars_base.Body.Sketch002.Edge4 (35.01 mm, 61.26 µm, 37.08 mm)</span>
    <button class="nav"><svg viewBox="0 0 20 20"><rect x="2" y="2" width="16" height="16" rx="2" fill="none" stroke="#333" stroke-width="2"/><path d="M2 13H18M10 13V18" stroke="#333" stroke-width="1.500"/></svg>Touchpad</button>
    <span class="size">136.62 mm x 82.74 mm</span>
  </footer>
</div>
</body>
</html>
```
FILE: styles.css
```css
* { box-sizing: border-box; }
body { margin: 0; background: #1d3557; font: 17px/20px Inter, "Liberation Sans", sans-serif; color: #111; }
button, select { font: inherit; color: inherit; border: 0; padding: 0; background: none; }
h1, h2, h3, ul { margin: 0; padding: 0; }
.defs { position: absolute; width: 0; height: 0; }
.app { height: 100vh; display: flex; flex-direction: column; border-radius: 12px; overflow: hidden; background: #ececec; }

/* icon strokes */
.k, .w, .r, .g, .b { fill: none; stroke-linejoin: round; }
.k { stroke: #2b2b2b; stroke-width: 4px; stroke-linecap: round; }
.w { stroke: #f4f4f2; stroke-width: 2px; stroke-linecap: round; }
.r { stroke: #e01b1b; stroke-width: 2px; stroke-linecap: round; }
.g { stroke: #73d216; stroke-width: 2px; stroke-linecap: round; }
.b { stroke: #4a80c0; stroke-width: 2px; stroke-linecap: round; }
.dr { fill: #e81c1c; stroke: #5a0000; }
.dg { fill: #8ae234; stroke: #2a5a02; }
.db { fill: #5a8fd0; stroke: #204a87; }
.cube { fill: #cfeeee; stroke: #0a4a4c; stroke-width: 4px; }

.titlebar { height: 35px; flex: none; display: grid; grid-template-columns: 1fr auto 1fr; align-items: center; background: #f3f4f6; border-bottom: 1px solid #d8d8d8; padding: 0 10px 4px; }
.titlebar h1 { font-size: 17px; line-height: 20px; font-weight: 700; color: #3c3c3c; }
.lights { display: flex; gap: 11px; }
.light { width: 16px; height: 16px; border-radius: 50%; }
.light.close { background: radial-gradient(circle, #6b0f0a 3px, #ec6a5e 4px); }
.light.min { background: #f5bf4f; }
.light.max { background: #61c554; }

.toolbar { height: 48px; flex: none; display: flex; align-items: center; background: linear-gradient(#ededed, #c8c8c8); border-top: 1px solid #fafafa; border-bottom: 1px solid #a4a4a4; }
.toolbar.main { height: 47px; padding-bottom: 1px; }
.grip { width: 13px; height: 28px; flex: none; background: radial-gradient(circle at 10px 4px, #979797 1px, transparent 2px) 0 0 / 13px 8px; }
.sep { width: 13px; height: 42px; flex: none; background: repeating-linear-gradient(#8a8a8a 0 2px, transparent 2px 4px) 5px 0 / 2px 100% no-repeat; }
.tool { width: 51px; height: 44px; flex: none; display: flex; align-items: center; justify-content: center; }
.tool svg { width: 32px; height: 32px; flex: none; }
.tool.menu { width: 62px; justify-content: flex-start; padding-left: 15px; }
.tool .chev, .filters .chev { width: 10px; height: 8px; }
.tool .chev { margin-top: 14px; }
.off { opacity: .5; }
.workbench { position: relative; width: 246px; margin: 0 9px 2px; }
.workbench select { appearance: none; width: 100%; height: 27px; border-radius: 6px; background: #fff; padding-left: 38px; box-shadow: 0 1px 2px #0005; display: block; }
.workbench svg { position: absolute; pointer-events: none; }
.wb-icon { width: 20px; height: 20px; left: 12px; top: 3px; }
.stepper { width: 22px; height: 22px; right: 2px; top: 2px; }

.work { flex: 1; min-height: 0; display: flex; }
.dock { width: 632px; flex: none; display: flex; flex-direction: column; min-height: 0; border-right: 2px solid #999; }
.tabs { display: flex; justify-content: center; }
.tabs.top { height: 29px; padding-top: 1px; background: linear-gradient(#ececec 13px, #e4e4e4 14px); }
.tab { display: flex; align-items: center; height: 27px; }
.tab.model { width: 79px; padding-left: 13px; background: #fff; border-radius: 6px 0 0 6px; box-shadow: 0 0 1px #0006; }
.tab.active { background: linear-gradient(#2f92ff, #0579ff); color: #fff; border-radius: 0 6px 6px 0; }
.tab.tasks { width: 134px; padding-left: 16px; gap: 9px; }
.tab.tasks svg { width: 20px; height: 20px; }
.dock-title { display: flex; align-items: center; gap: 11px; height: 26px; flex: none; border-bottom: 2px solid #bdbdbd; padding: 0 1px 1px 17px; }
.dock-title h2 { flex: 1; text-align: center; font-size: 17px; line-height: 20px; font-weight: 400; }
.mini { width: 21px; height: 21px; border: 1px solid #9c9c9c; background: #f4f4f4; }
.mini svg { display: block; }
.panel { flex: 1; min-height: 0; overflow: hidden; background: #d8dce4; border-left: 3px solid #c8cbd0; padding: 28px 33px 0 17px; }
.close-btn { display: block; width: 84px; height: 27px; margin: 0 auto 33px 253px; padding-bottom: 1px; border-radius: 6px; background: #fff; box-shadow: 0 1px 2px #0005; }
h3 { display: flex; align-items: center; gap: 4px; height: 22px; font-size: 14px; line-height: 20px; font-weight: 600; color: #808bb0; }
h3 svg { width: 20px; height: 20px; }
h3.first { margin-bottom: 26px; }
section { margin-bottom: 41px; }
input[type=checkbox] { appearance: none; width: 19px; height: 19px; flex: none; margin: 0; border-radius: 5px; background: linear-gradient(#2a90ff, #0579ff); display: grid; place-items: center; }
input[type=checkbox]::after { content: ""; width: 6px; height: 11px; margin-top: -3px; border: solid #fff; border-width: 0 2px 2px 0; transform: rotate(40deg); }
.filters { display: flex; height: 34px; margin: 33px 0 19px 33px; align-items: center; }
.filter, .square { height: 34px; border: 2px solid #b0b0b0; }
.filter { flex: 1; margin-left: 8px; background: linear-gradient(#f0f0f0, #e4e4e4 50%, #f8f8f8); font-size: 14px; }
.square { display: grid; place-items: center; background: #efefef; }
.square svg { width: 20px; height: 20px; }
.filters .chev { align-self: flex-end; margin-bottom: 2px; }
.eye { width: 35px; margin: 0 13px 0 12px; }
.settings { width: 38px; }
.filter + .chev + .settings { margin-left: 12px; }
.list { list-style: none; margin-left: 31px; width: 544px; height: 255px; overflow: hidden; background: #fff; border: 1px solid #b4b4b4; font-size: 16px; }
.list li { height: 37px; }
.list label { display: flex; height: 37px; align-items: center; padding-left: 9px; }
.list svg { width: 32px; height: 32px; margin: 0 8px 0 17px; }
.list.elements label { padding-left: 8px; }
.elements svg { margin: 0 0 0 5px; }
.elements input { margin-right: 9px; }
.dash { width: 15px; height: 3px; background: #444; margin: 0 14px; }

.stage { flex: 1; min-width: 0; display: flex; flex-direction: column; }
.viewport { position: relative; flex: 1; min-height: 0; overflow: hidden; background: linear-gradient(#333366, #9696aa); }
.scene { display: block; width: 100%; height: 100%; }
.dim, .coords { font-family: "Liberation Sans", sans-serif; }
.dim { font-size: 27px; fill: #ff2600; }
.coords { font-size: 35px; fill: #00f; }
.navcube { position: absolute; top: 6px; right: 2px; width: 92px; height: 98px; overflow: visible; }
.navcube text { font-size: 9px; text-anchor: middle; fill: #8888b2; }
.axes { position: absolute; right: 3px; bottom: 32px; width: 42px; height: 42px; overflow: visible; }
.axes text { font: 700 7px "Liberation Sans", sans-serif; text-anchor: middle; fill: #20203a; }
.tabs.bottom { height: 28px; flex: none; background: linear-gradient(#e4e4e4 13px, #ececec 14px); padding-top: 1px; }
.tab.start { width: 97px; padding-left: 6px; gap: 9px; background: #fff; border-radius: 6px 0 0 6px; }
.tab.doc { width: 240px; padding-left: 10px; gap: 20px; }
.tabs.bottom svg { width: 12px; height: 12px; }
.tabs.bottom .file { width: 16px; height: 20px; margin-right: -7px; }

.status { height: 54px; flex: none; display: flex; align-items: center; background: linear-gradient(#eaeaea, #b2b2b2); border-top: 2px solid #b0b0b0; padding: 0 48px 2px 3px; }
.msg { flex: 1; }
.nav { display: flex; align-items: center; gap: 9px; margin-right: 76px; }
.nav svg { width: 20px; height: 20px; }
```
